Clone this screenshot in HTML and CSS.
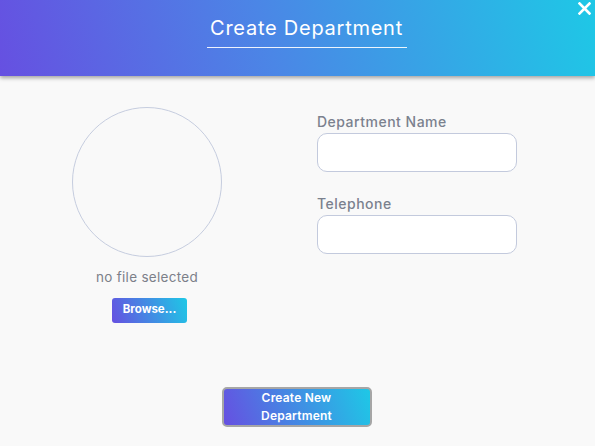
FILE: index.html
```html
<!DOCTYPE html>
<html>
<head>
<meta charset="utf-8">
<link rel="stylesheet" href="styles.css">
</head>
<body>
<header class="header">
  <h1 class="title">Create Department</h1>
  <button class="close" aria-label="Close">
    <svg width="13" height="13" viewBox="0 0 13 13"><path d="M1.5 1.5 L11.5 11.5 M11.5 1.5 L1.5 11.5" stroke="#fff" stroke-width="2.6" stroke-linecap="square"/></svg>
  </button>
</header>
<main class="main">
  <section class="photo">
    <div class="circle"></div>
    <div class="nofile">no file selected</div>
    <button class="browse">Browse...</button>
  </section>
  <section class="fields">
    <label class="label">Department Name</label>
    <input class="input" type="text">
    <label class="label second">Telephone</label>
    <input class="input" type="text">
  </section>
</main>
<div class="actions">
  <button class="create">Create New<br>Department</button>
</div>
</body>
</html>
```

FILE: styles.css
```css
html, body {
  margin: 0;
  padding: 0;
  background: #f9f9f9;
  font-family: "Inter", "Noto Sans", sans-serif;
}
.header {
  position: relative;
  height: 76px;
  background: linear-gradient(75deg, #6650e1 0%, #4b86e6 45%, #1ec8e6 100%);
  box-shadow: 0 2px 4px rgba(0,0,0,0.35);
  display: flex;
  justify-content: center;
}
.title {
  margin: 15px 0 0 18px;
  width: 200px;
  height: 32px;
  padding: 0;
  text-align: center;
  border-bottom: 1px solid rgba(255,255,255,0.9);
  color: #fff;
  font-weight: 400;
  font-size: 20px;
  line-height: 27px;
  letter-spacing: 0.75px;
}
.close {
  position: absolute;
  top: 2px;
  right: 4px;
  border: 0;
  padding: 0;
  background: none;
  width: 13px;
  height: 13px;
  display: block;
}
.close svg { display: block; }
.main {
  display: flex;
  height: 311px;
}
.photo {
  width: 294px;
  display: flex;
  flex-direction: column;
  align-items: center;
  padding-top: 31px;
}
.circle {
  width: 148px;
  height: 148px;
  border: 1px solid #c6cddf;
  border-radius: 50%;
}
.nofile {
  margin-top: 10px;
  font-size: 13.5px;
  line-height: 20px;
  color: #7c8089;
  letter-spacing: 0.3px;
}
.browse {
  margin-top: 11px;
  margin-left: 5px;
  width: 75px;
  height: 25px;
  border: 0;
  border-radius: 3px;
  background: linear-gradient(70deg, #6650e1, #1ec8e6);
  color: #fff;
  font-family: inherit;
  font-weight: 700;
  font-size: 11.5px;
  padding: 0 0 3px 0;
  text-align: center;
}
.fields {
  margin-left: 23px;
  width: 200px;
  display: flex;
  flex-direction: column;
  padding-top: 36px;
}
.label {
  font-size: 14px;
  line-height: 20px;
  font-weight: 500;
  color: #7b818e;
  margin-bottom: 1px;
  letter-spacing: 0.5px;
}
.label.second {
  margin-top: 22px;
}
.input {
  box-sizing: border-box;
  width: 200px;
  height: 39px;
  border: 1px solid #c3cadd;
  border-radius: 10px;
  background: #fff;
  margin: 0;
}
.actions {
  display: flex;
  justify-content: center;
}
.create {
  box-sizing: border-box;
  width: 150px;
  height: 40px;
  margin-left: -2px;
  border: 2px solid #a6a6a6;
  border-radius: 5px;
  background: linear-gradient(70deg, #6650e1, #1ec8e6);
  color: #fff;
  font-family: inherit;
  font-weight: 600;
  font-size: 12px;
  line-height: 18px;
  letter-spacing: 0.2px;
  padding: 0;
}
```
